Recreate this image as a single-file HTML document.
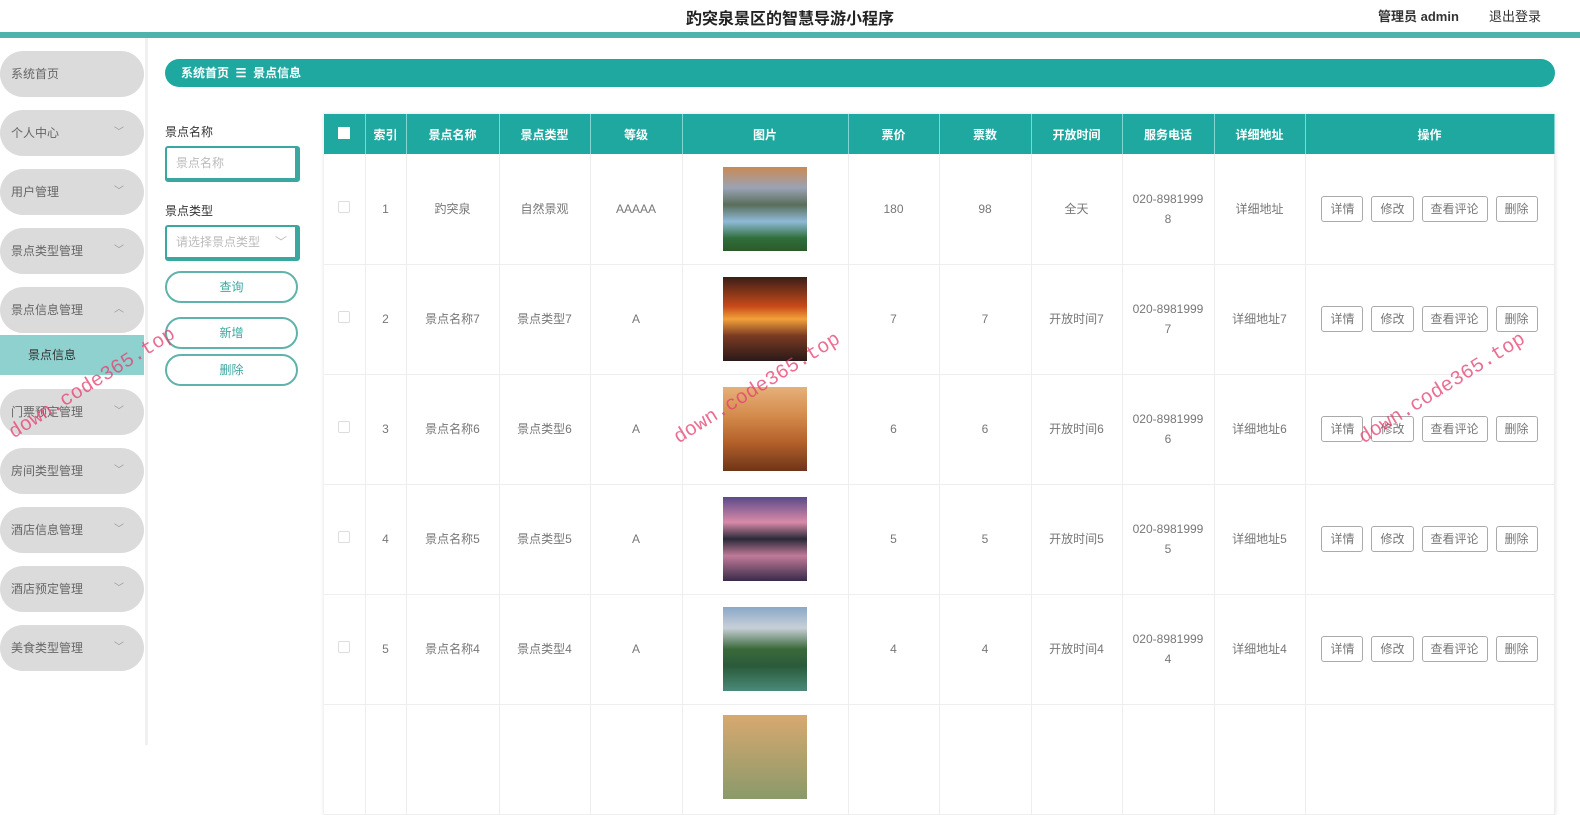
<!DOCTYPE html>
<html><head><meta charset="utf-8"><style>
*{margin:0;padding:0;box-sizing:border-box}
body{width:1580px;height:745px;overflow:hidden;background:#fff;font-family:"Liberation Sans","Noto Sans CJK SC",sans-serif;position:relative;color:#666}
.abs{position:absolute}
.top{left:0;top:0;width:1580px;height:32px;background:#fff}
.line{left:0;top:32px;width:1580px;height:6px;background:#4fb3ad}
.title{left:0;width:1580px;top:5px;text-align:center;font-size:16px;font-weight:bold;color:#222}
.side{left:0;top:38px;width:148px;height:707px;background:#fff;border-right:3px solid #f0f0f0}
.mi{left:0;width:144px;height:46px;border-radius:23px;background:#dcdbdc;font-size:12px;color:#666;padding-left:11px;line-height:46px}
.mi i{position:absolute;right:20px;top:0;font-style:normal;color:#999;font-size:10px}
.sub{left:0;top:335px;width:144px;height:40px;background:#8fd1ce;font-size:12px;color:#333;line-height:40px;padding-left:28px}
.bc{left:165px;top:59px;width:1390px;height:28px;background:#1fa8a0;border-radius:14px;color:#fff;font-size:12px;font-weight:bold;line-height:28px;padding-left:16px}
.lbl{left:165px;font-size:12px;color:#333}
.inp{left:165px;width:135px;height:36px;border:2px solid #3aa89f;border-right-width:5px;border-bottom-width:4px;border-radius:3px;font-size:12px;color:#bbb;line-height:30px;padding-left:9px}
.btn{left:165px;width:133px;height:32px;border:2px solid #5fb3aa;border-radius:16px;text-align:center;line-height:28px;font-size:12px;color:#3aa89f}
table{position:absolute;left:324px;top:114px;border-collapse:collapse;width:1230px;table-layout:fixed;box-shadow:0 0 4px #ddd}
th{background:#1fa8a0;color:#fff;font-size:12px;height:40px;border-right:1px solid #7fd6d2;font-weight:bold}
td{height:110px;border-right:1px solid #eee;border-bottom:1px solid #eee;text-align:center;font-size:12px;color:#777;line-height:20px}
.cb{display:inline-block;width:12px;height:12px;border:1px solid #ddd;border-radius:2px}
.pic{width:84px;height:84px;margin:0 auto}
.ob{display:inline-block;border:1px solid #aaa;border-radius:3px;height:26px;line-height:24px;padding:0 8px;margin:0 4px;font-size:12px;color:#777}
.wm{color:rgba(230,60,110,.75);font-size:20px;font-family:"Liberation Mono",monospace;transform:rotate(-32deg);transform-origin:left top}
</style></head><body>
<div class="abs top"></div>
<div class="abs title">趵突泉景区的智慧导游小程序</div>
<div class="abs" style="left:1378px;top:6px;font-size:13px;font-weight:bold;color:#333">管理员 admin</div>
<div class="abs" style="left:1489px;top:6px;font-size:13px;color:#333">退出登录</div>
<div class="abs line"></div>
<div class="abs side"></div>
<div class="abs mi" style="top:51px">系统首页</div>
<div class="abs mi" style="top:110px">个人中心<i>﹀</i></div>
<div class="abs mi" style="top:169px">用户管理<i>﹀</i></div>
<div class="abs mi" style="top:228px">景点类型管理<i>﹀</i></div>
<div class="abs mi" style="top:287px">景点信息管理<i>︿</i></div>
<div class="abs sub">景点信息</div>
<div class="abs mi" style="top:389px">门票预定管理<i>﹀</i></div>
<div class="abs mi" style="top:448px">房间类型管理<i>﹀</i></div>
<div class="abs mi" style="top:507px">酒店信息管理<i>﹀</i></div>
<div class="abs mi" style="top:566px">酒店预定管理<i>﹀</i></div>
<div class="abs mi" style="top:625px">美食类型管理<i>﹀</i></div>
<div class="abs bc">系统首页 &nbsp;☰&nbsp; 景点信息</div>
<div class="abs lbl" style="top:123px">景点名称</div>
<div class="abs inp" style="top:146px">景点名称</div>
<div class="abs lbl" style="top:202px">景点类型</div>
<div class="abs inp" style="top:225px">请选择景点类型<span style="position:absolute;right:8px;color:#bbb">﹀</span></div>
<div class="abs btn" style="top:271px">查询</div>
<div class="abs btn" style="top:317px">新增</div>
<div class="abs btn" style="top:354px">删除</div>
<table>
<colgroup><col style="width:41px"><col style="width:41px"><col style="width:93px"><col style="width:91px"><col style="width:92px"><col style="width:166px"><col style="width:91px"><col style="width:92px"><col style="width:91px"><col style="width:92px"><col style="width:91px"><col style="width:249px"></colgroup>
<tr><th><span style="display:inline-block;width:12px;height:12px;background:#fff"></span></th><th>索引</th><th>景点名称</th><th>景点类型</th><th>等级</th><th>图片</th><th>票价</th><th>票数</th><th>开放时间</th><th>服务电话</th><th>详细地址</th><th>操作</th></tr>
<tr><td><span class="cb"></span></td><td>1</td><td>趵突泉</td><td>自然景观</td><td>AAAAA</td><td><div class="pic" style="background:linear-gradient(#c98a55 0%,#9aa3b5 25%,#5a6e5a 45%,#8fbad8 65%,#2f6e3a 85%,#2b5a2a)"></div></td><td>180</td><td>98</td><td>全天</td><td>020-8981999<br>8</td><td>详细地址</td><td><span class="ob">详情</span><span class="ob">修改</span><span class="ob">查看评论</span><span class="ob">删除</span></td></tr>
<tr><td><span class="cb"></span></td><td>2</td><td>景点名称7</td><td>景点类型7</td><td>A</td><td><div class="pic" style="background:linear-gradient(#3a1e18 0%,#c84a1a 35%,#f3a13a 50%,#7a3a22 70%,#2a1a18)"></div></td><td>7</td><td>7</td><td>开放时间7</td><td>020-8981999<br>7</td><td>详细地址7</td><td><span class="ob">详情</span><span class="ob">修改</span><span class="ob">查看评论</span><span class="ob">删除</span></td></tr>
<tr><td><span class="cb"></span></td><td>3</td><td>景点名称6</td><td>景点类型6</td><td>A</td><td><div class="pic" style="background:linear-gradient(#e6b07a 0%,#d38a4a 35%,#b5622a 65%,#6e3418)"></div></td><td>6</td><td>6</td><td>开放时间6</td><td>020-8981999<br>6</td><td>详细地址6</td><td><span class="ob">详情</span><span class="ob">修改</span><span class="ob">查看评论</span><span class="ob">删除</span></td></tr>
<tr><td><span class="cb"></span></td><td>4</td><td>景点名称5</td><td>景点类型5</td><td>A</td><td><div class="pic" style="background:linear-gradient(#5a4a8a 0%,#d98aa8 30%,#2a2a3a 50%,#c07a98 70%,#3a2a4a)"></div></td><td>5</td><td>5</td><td>开放时间5</td><td>020-8981999<br>5</td><td>详细地址5</td><td><span class="ob">详情</span><span class="ob">修改</span><span class="ob">查看评论</span><span class="ob">删除</span></td></tr>
<tr><td><span class="cb"></span></td><td>5</td><td>景点名称4</td><td>景点类型4</td><td>A</td><td><div class="pic" style="background:linear-gradient(#8aa8c8 0%,#c8d0d8 25%,#3a6a3a 50%,#2a5a3a 70%,#4a8a7a)"></div></td><td>4</td><td>4</td><td>开放时间4</td><td>020-8981999<br>4</td><td>详细地址4</td><td><span class="ob">详情</span><span class="ob">修改</span><span class="ob">查看评论</span><span class="ob">删除</span></td></tr>
<tr><td></td><td></td><td></td><td></td><td></td><td style="vertical-align:top;padding-top:10px"><div class="pic" style="background:linear-gradient(#d8a870,#8a9a6a)"></div></td><td></td><td></td><td></td><td></td><td></td><td></td></tr>
</table>
<div class="abs wm" style="left:5px;top:425px">down.code365.top</div>
<div class="abs wm" style="left:670px;top:430px">down.code365.top</div>
<div class="abs wm" style="left:1355px;top:430px">down.code365.top</div>
</body></html>
